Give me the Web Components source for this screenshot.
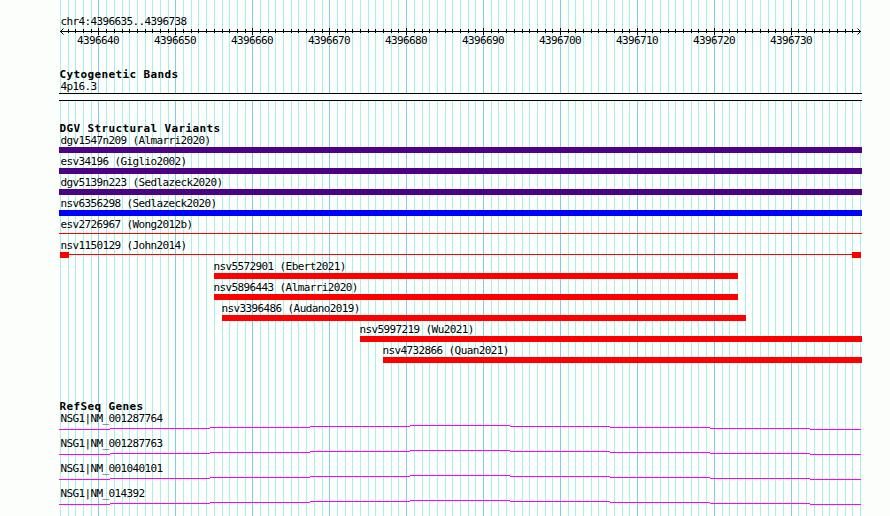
<!DOCTYPE html>
<html lang="en">
<head>
<meta charset="utf-8">
<title>chr4:4396635..4396738</title>
<style>
    body {
        margin: 0;
        background: #fcfefc;
    }
</style>
</head>
<body>
<genome-view>
    <scale-track name="chr4:4396635..4396738"></scale-track>
    <track-group name="Cytogenetic Bands" style="height: 54px">
        <feature-row name="4p16.3" kind="band" style="height: 21px"></feature-row>
    </track-group>
    <track-group name="DGV Structural Variants" style="height: 278px">
        <feature-row name="dgv1547n209 (Almarri2020)" color="#4c0284"></feature-row>
        <feature-row name="esv34196 (Giglio2002)" color="#4c0284"></feature-row>
        <feature-row name="dgv5139n223 (Sedlazeck2020)" color="#4c0284"></feature-row>
        <feature-row name="nsv6356298 (Sedlazeck2020)" color="#0000ff"></feature-row>
        <feature-row name="esv2726967 (Wong2012b)" kind="line"></feature-row>
        <feature-row name="nsv1150129 (John2014)" kind="ends"></feature-row>
        <feature-row name="nsv5572901 (Ebert2021)" from="155" to="679"></feature-row>
        <feature-row name="nsv5896443 (Almarri2020)" from="155" to="679"></feature-row>
        <feature-row name="nsv3396486 (Audano2019)" from="163" to="687"></feature-row>
        <feature-row name="nsv5997219 (Wu2021)" from="301"></feature-row>
        <feature-row name="nsv4732866 (Quan2021)" from="324"></feature-row>
    </track-group>
    <track-group name="RefSeq Genes" style="height: 116px">
        <feature-row name="NSG1|NM_001287764" kind="gene"></feature-row>
        <feature-row name="NSG1|NM_001287763" kind="gene"></feature-row>
        <feature-row name="NSG1|NM_001040101" kind="gene"></feature-row>
        <feature-row name="NSG1|NM_014392" kind="gene"></feature-row>
    </track-group>
</genome-view>

<script>
const START = 4396635;
const BASES = 104;

// offset of a base inside the 803px wide panel
function baseX(i) {
    return 1 + Math.round(i * 800 / BASES);
}

function isMajor(i) {
    return (START + i) % 10 === 0;
}

const FONT = '11px/13px "DejaVu Sans Mono", monospace';





customElements.define('genome-view', class extends HTMLElement {
    connectedCallback() {
        const shadow = this.attachShadow({mode: 'open'});
        let lines = '';
        for (let i = 0; i <= BASES; i++) {
            lines += `<rect x="${baseX(i)}" width="1" height="516" fill="${isMajor(i) ? '#84caec' : '#aceeec'}"/>`;
        }
        shadow.innerHTML = `
<style>
    :host {
        display: grid;
        grid-template: 516px / 803px;
        padding-left: 59px;
        overflow: hidden;
        color: #000;
    }
    svg, #tracks {
        grid-area: 1 / 1;
    }
    #tracks {
        display: flex;
        flex-direction: column;
        padding-top: 15px;
        min-height: 0;
        box-sizing: border-box;
    }
</style>
<svg width="803" height="516" shape-rendering="crispEdges">${lines}</svg>
<div id="tracks"><slot></slot></div>`;
    }
});





customElements.define('scale-track', class extends HTMLElement {
    connectedCallback() {
        const shadow = this.attachShadow({mode: 'open'});
        let ticks = '';
        let labels = '';
        for (let i = 1; i < BASES; i++) {
            const x = baseX(i);
            if (isMajor(i)) {
                ticks += `<rect x="${x}" y="0" width="1" height="7"/>`;
                labels += `<text x="${x - 21}" y="16">${START + i}</text>`;
            } else {
                ticks += `<rect x="${x}" y="1" width="1" height="4"/>`;
            }
        }
        shadow.innerHTML = `
<style>
    :host {
        display: block;
        flex: none;
        height: 53px;
        font: ${FONT};
        letter-spacing: -0.62px;
    }
    #name {
        padding-left: 1.5px;
    }
    svg {
        display: block;
        overflow: visible;
    }
</style>
<div id="name"></div>
<svg width="803" height="20">
    <g shape-rendering="crispEdges">
        <rect x="1" y="3" width="801" height="1"/>
        ${ticks}
    </g>
    <path d="M4.5 .5L1.5 3.5L4.5 6.5M798.5 .5L801.5 3.5L798.5 6.5" fill="none" stroke="#000"/>
    ${labels}
</svg>`;
        shadow.getElementById('name').textContent = this.getAttribute('name');
    }
});





customElements.define('track-group', class extends HTMLElement {
    connectedCallback() {
        const shadow = this.attachShadow({mode: 'open'});
        shadow.innerHTML = `
<style>
    :host {
        display: flex;
        flex-direction: column;
        flex: none;
    }
    h2 {
        margin: 0;
        padding-left: 0.5px;
        font: bold ${FONT};
        height: 12px;
        letter-spacing: 0.38px;
    }
</style>
<h2></h2>
<slot></slot>`;
        shadow.querySelector('h2').textContent = this.getAttribute('name');
    }
});





customElements.define('feature-row', class extends HTMLElement {
    connectedCallback() {
        const shadow = this.attachShadow({mode: 'open'});
        const kind = this.getAttribute('kind') || 'bar';
        const from = Number(this.getAttribute('from') || 0);
        shadow.innerHTML = `
<style>
    :host {
        display: block;
        flex: none;
        height: ${kind === 'gene' ? 25 : 21}px;
        font: ${FONT};
        letter-spacing: -0.62px;
    }
    #name {
        height: 13px;
        white-space: nowrap;
        padding-left: ${from ? from - 0.4 : 1.5}px;
    }
    svg {
        display: block;
        overflow: visible;
    }
</style>
<div id="name"></div>
<svg width="803" height="8" shape-rendering="crispEdges">${this.glyph(kind, from)}</svg>`;
        shadow.getElementById('name').textContent = this.getAttribute('name');
    }

    glyph(kind, from) {
        if (kind === 'band') {
            return '<rect y="1" width="803" height="6" fill="#fcfefc"/>' +
                '<rect width="803" height="1"/><rect y="7" width="803" height="1"/>';
        }
        if (kind === 'line') {
            return '<rect y="2" width="803" height="1" fill="#f00"/>';
        }
        if (kind === 'ends') {
            return '<g fill="#f00"><rect x="1" y="2" width="801" height="1"/>' +
                '<rect x="1" width="9" height="6"/><rect x="793" width="9" height="6"/></g>';
        }
        if (kind === 'gene') {
            // intron drawn as a very flat hat, one pixel per step
            const edges = [0, 51, 151, 251, 351, 451, 551, 651, 751, 802];
            let out = '';
            for (let i = 0; i < 9; i++) {
                out += `<rect x="${edges[i]}" y="${Math.abs(i - 4)}" width="${edges[i + 1] - edges[i]}" height="1" fill="#f0f"/>`;
            }
            return out;
        }
        const to = Number(this.getAttribute('to') || 803);
        return `<rect x="${from}" width="${to - from}" height="6" fill="${this.getAttribute('color') || '#f00'}"/>`;
    }
});
</script>
</body>
</html>
